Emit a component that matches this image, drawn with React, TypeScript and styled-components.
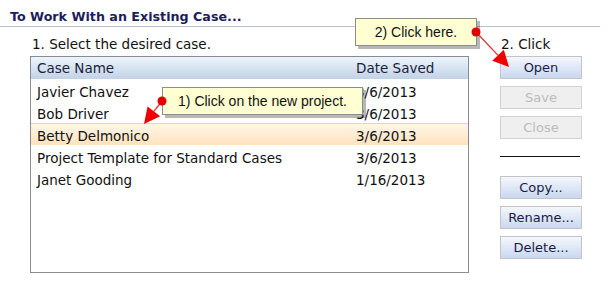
import { FC } from 'react';
import styled, { createGlobalStyle } from 'styled-components';

const cases = [
  { id: 1, name: 'Javier Chavez', saved: '3/6/2013' },
  { id: 2, name: 'Bob Driver', saved: '3/6/2013' },
  { id: 3, name: 'Betty Delmonico', saved: '3/6/2013', selected: true },
  { id: 4, name: 'Project Template for Standard Cases', saved: '3/6/2013' },
  { id: 5, name: 'Janet Gooding', saved: '1/16/2013' },
];

const GlobalStyle = createGlobalStyle`
  html, body {
    margin: 0;
    padding: 0;
    background: #ffffff;
  }
`;

const Root = styled.div`
  position: relative;
  width: 610px;
  height: 284px;
  overflow: hidden;
  font-family: 'DejaVu Sans', Verdana, sans-serif;
  font-size: 13.5px;
  color: #111111;
`;

const Title = styled.div`
  height: 27px;
  box-sizing: border-box;
  padding: 9px 0 0 10px;
  margin-right: 10px;
  border-bottom: 1px solid #b7c2d2;
  font-weight: bold;
  font-size: 12.7px;
  color: #1d1d5c;
`;

const Body = styled.div`
  display: flex;
  padding-left: 30px;
`;

const Left = styled.div`
  width: 439px;
`;

const Label = styled.div`
  height: 29px;
  box-sizing: border-box;
  padding: 9px 0 0 2px;
`;

const Table = styled.div`
  height: 217px;
  box-sizing: border-box;
  border: 1px solid #8a8a96;
`;

const Row = styled.div<{ $selected?: boolean }>`
  display: grid;
  grid-template-columns: 319px 1fr;
  height: 22px;
  box-sizing: border-box;
  align-items: center;
  padding: 3px 0 0 6px;
  ${(p) =>
    p.$selected &&
    `
    background: linear-gradient(#fff6ea, #ffe3bd);
    box-shadow: inset 0 1px 0 #f8d39c;
  `}
`;

const HeadRow = styled(Row)`
  padding-top: 0;
  background: linear-gradient(#ecf5fc, #c2d2e6);
  color: #1c1c3c;
`;

const Right = styled.div`
  display: flex;
  flex-direction: column;
  margin-left: 31px;
  width: 82px;
`;

const ClickLabel = styled.div`
  height: 29px;
  box-sizing: border-box;
  padding: 9px 0 0 1px;
`;

const Button = styled.button<{ $disabled?: boolean }>`
  height: 23px;
  width: 82px;
  margin-bottom: 7px;
  box-sizing: border-box;
  border: 1px solid ${(p) => (p.$disabled ? '#d2d2d2' : '#c4c4c8')};
  background: ${(p) => (p.$disabled ? '#efefef' : 'linear-gradient(#f4f7fd, #c9d8f0)')};
  color: ${(p) => (p.$disabled ? '#bcbcbc' : '#1a1a44')};
  font-family: 'DejaVu Sans', Verdana, sans-serif;
  font-size: 13px;
  padding: 0;
`;

const Divider = styled.div`
  width: 80px;
  border-top: 1px solid #111111;
  margin: 10px 0 19px;
`;

const Callout = styled.div<{ $x: number; $y: number; $w: number }>`
  position: absolute;
  left: ${(p) => p.$x}px;
  top: ${(p) => p.$y}px;
  width: ${(p) => p.$w}px;
  height: 28px;
  box-sizing: border-box;
  display: flex;
  align-items: center;
  justify-content: center;
  background: #ffffd2;
  border: 1px solid #8c8c8c;
  box-shadow: 3px 3px 0 rgba(0, 0, 0, 0.28);
  font-family: 'Liberation Sans', Arial, sans-serif;
  font-size: 14px;
  color: #111111;
`;

const Arrows = styled.svg`
  position: absolute;
  left: 0;
  top: 0;
  pointer-events: none;
`;

const Pointer: FC<{ x1: number; y1: number; x2: number; y2: number }> = ({ x1, y1, x2, y2 }) => {
  const dx = x2 - x1;
  const dy = y2 - y1;
  const len = Math.hypot(dx, dy);
  const ux = dx / len;
  const uy = dy / len;
  const bx = x2 - ux * 16;
  const by = y2 - uy * 16;
  const px = -uy * 8;
  const py = ux * 8;
  return (
    <g>
      <line x1={x1} y1={y1} x2={bx} y2={by} stroke="#e83030" strokeWidth="1.3" />
      <polygon points={`${x2},${y2} ${bx + px},${by + py} ${bx - px},${by - py}`} fill="#ee0000" />
      <circle cx={x1} cy={y1} r="4.5" fill="#e00000" />
    </g>
  );
};

const App: FC = () => (
  <Root>
    <GlobalStyle />
    <Title>To Work With an Existing Case...</Title>
    <Body>
      <Left>
        <Label>1. Select the desired case.</Label>
        <Table>
          <HeadRow>
            <span>Case Name</span>
            <span>Date Saved</span>
          </HeadRow>
          {cases.map((c) => (
            <Row key={c.id} $selected={c.selected}>
              <span>{c.name}</span>
              <span>{c.saved}</span>
            </Row>
          ))}
        </Table>
      </Left>
      <Right>
        <ClickLabel>2. Click</ClickLabel>
        <Button>Open</Button>
        <Button $disabled>Save</Button>
        <Button $disabled>Close</Button>
        <Divider />
        <Button>Copy...</Button>
        <Button>Rename...</Button>
        <Button>Delete...</Button>
      </Right>
    </Body>
    <Callout $x={355} $y={18} $w={122}>2) Click here.</Callout>
    <Callout $x={162} $y={87} $w={201}>1) Click on the new project.</Callout>
    <Arrows width="610" height="284">
      <Pointer x1={476} y1={32} x2={509} y2={67} />
      <Pointer x1={162} y1={101} x2={144} y2={124} />
    </Arrows>
  </Root>
);

export default App;
